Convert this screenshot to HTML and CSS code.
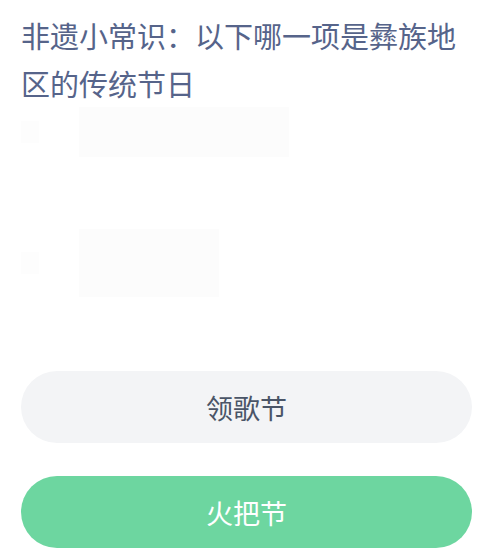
FILE: index.html
```html
<!DOCTYPE html>
<html>
  <head>
    <title>Quiz</title>
    <meta name="viewport" content="width=device-width, initial-scale=1.0" />
    <link rel="stylesheet" href="styles.css">
  </head>
  <body>
    <div class="quiz">
      <p class="question">非遗小常识：以下哪一项是彝族地区的传统节日</p>
      <div class="ghost">
        <div class="ghost-row"><span class="ghost-dot"></span><span class="ghost-box wide"></span></div>
        <div class="ghost-row"><span class="ghost-dot"></span><span class="ghost-box"></span></div>
      </div>
      <div class="options">
        <button class="option">领歌节</button>
        <button class="option correct">火把节</button>
      </div>
    </div>
  </body>
</html>
```

FILE: styles.css
```css
body {
  margin: 0;
  background: #ffffff;
  font-family: "Noto Sans CJK SC", "Noto Sans", sans-serif;
}
.quiz {
  padding: 11px 13px 0 21px;
  display: flex;
  flex-direction: column;
}
.question {
  margin: 0;
  font-size: 29px;
  line-height: 48px;
  color: #56648a;
}
.ghost {
  display: flex;
  flex-direction: column;
  gap: 72px;
  padding: 0;
  height: 264px;
}
.ghost-row {
  display: flex;
  align-items: center;
  gap: 40px;
}
.ghost-dot {
  width: 18px;
  height: 22px;
  background: #fdfdfd;
}
.ghost-box {
  width: 140px;
  height: 68px;
  background: #fcfcfc;
}
.ghost-box.wide {
  width: 210px;
  height: 50px;
}
.options {
  display: flex;
  flex-direction: column;
  gap: 33px;
}
.option {
  height: 72px;
  width: 451px;
  border: 0;
  border-radius: 36px;
  background: #f3f4f6;
  color: #4a5567;
  font-family: inherit;
  font-size: 27px;
  padding: 0;
}
.correct {
  background: #6dd6a0;
  color: #ffffff;
}
```
